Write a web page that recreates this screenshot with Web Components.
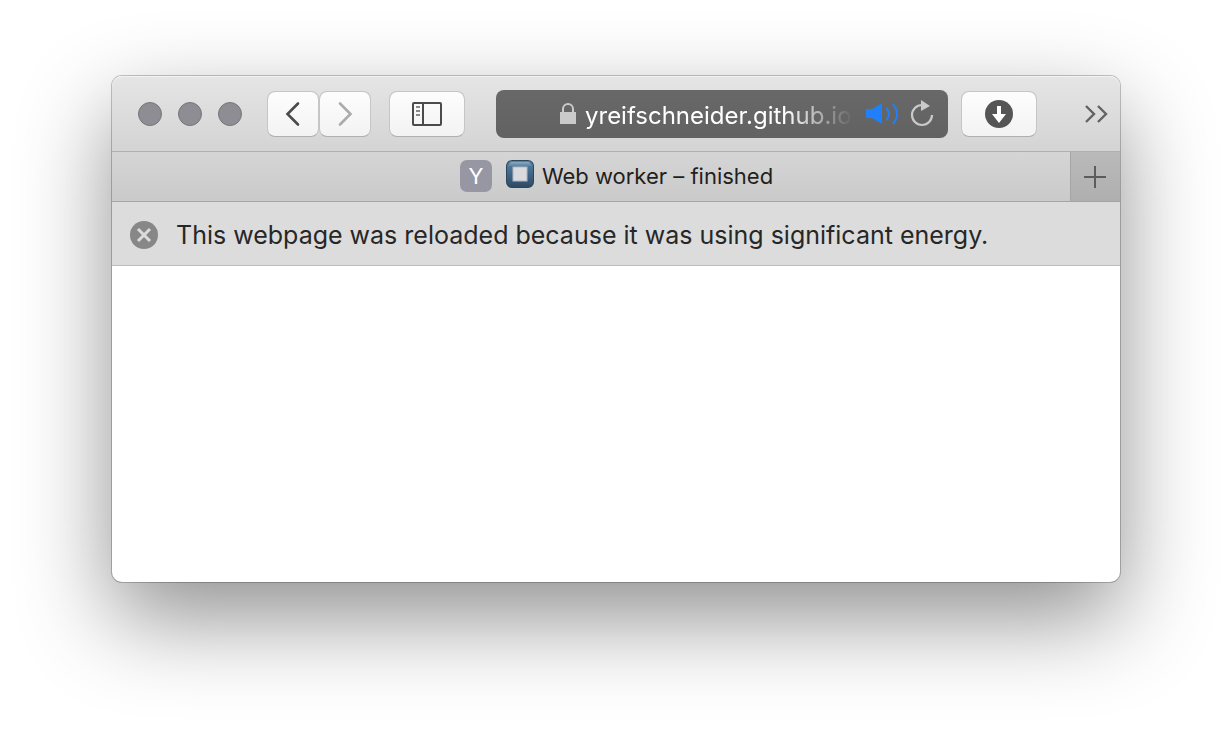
<!DOCTYPE html>
<html lang="en">
<head>
<meta charset="utf-8">
<title>Web worker – finished</title>
<style>
  html { background: #fff; }
  body { margin: 0; font-family: Inter, "Liberation Sans", sans-serif; color: #272727; }
</style>
</head>
<body>
<browser-window>
  <window-toolbar slot="toolbar"></window-toolbar>
  <tab-bar slot="tabs"><page-tab letter="Y">Web worker – finished</page-tab></tab-bar>
  <notice-bar slot="notice">This webpage was reloaded because it was using significant energy.</notice-bar>
</browser-window>

<script>
const define = (name, markup, setup) => {
  customElements.define(name, class extends HTMLElement {
    constructor() {
      super();
      this.attachShadow({ mode: 'open' }).innerHTML = markup;
    }
    connectedCallback() { if (setup) setup(this, this.shadowRoot); }
  });
};

define('browser-window', `
  <style>
    :host { display: flex; box-sizing: border-box; min-height: 100vh; padding: 76px 112px 148px; overflow: hidden; }
    .frame { flex: 1; min-width: 0; display: flex; flex-direction: column; background: #fff; border-radius: 10px;
      box-shadow: 0 0 0 1px rgba(0,0,0,.22), 0 36px 92px rgba(0,0,0,.44); }
    main { flex: 1; }
  </style>
  <div class="frame">
    <slot name="toolbar"></slot>
    <slot name="tabs"></slot>
    <slot name="notice"></slot>
    <main><slot></slot></main>
  </div>`);

define('traffic-lights', `
  <style>
    :host { display: flex; gap: 16px; }
    button { width: 24px; height: 24px; padding: 0; border: 1px solid #77767b; border-radius: 50%; background: #8e8d93; }
  </style>
  <button aria-label="Close"></button><button aria-label="Minimize"></button><button aria-label="Zoom"></button>`);

define('tool-button', `
  <style>
    :host { display: block; width: 76px; }
    :host([narrow]) { width: 52px; }
    button { display: grid; place-items: center; box-sizing: border-box; width: 100%; height: 46px; padding: 0;
      border: 1px solid #c6c6c6; border-bottom-color: #b0b0b0; border-radius: 8px;
      background: linear-gradient(#fdfdfd, #f3f3f3); background-clip: padding-box; }
  </style>
  <button><slot></slot></button>`,
  (el, root) => root.querySelector('button').setAttribute('aria-label', el.getAttribute('label')));

define('address-field', `
  <style>
    :host { display: flex; align-items: center; box-sizing: border-box; height: 48px; padding: 0 14px 0 63px;
      border-radius: 8px; background: linear-gradient(#686868, #626262); }
    svg { display: block; flex: none; }
    input { flex: 1; min-width: 0; box-sizing: border-box; height: 36px; margin: 0 12px 0 8px; padding: 4px 0 0; border: 0; outline: 0; background: none;
      color: #fff; font: 24px/32px Inter, "Liberation Sans", sans-serif;
      -webkit-mask-image: linear-gradient(90deg, #000 calc(100% - 68px), transparent);
      mask-image: linear-gradient(90deg, #000 calc(100% - 68px), transparent); }
    button { border: 0; padding: 0; background: none; }
    .reload { margin-left: 11px; }
  </style>
  <svg width="18" height="22" viewBox="0 0 18 22"><path d="M4 10V6a5 5 0 0 1 10 0v4" fill="none" stroke="#cacaca" stroke-width="2"/><path d="M1 9h16v12H1z" fill="#cacaca"/></svg>
  <input type="text" aria-label="Address" value="yreifschneider.github.io">
  <button aria-label="Mute this tab"><svg width="34" height="24" viewBox="0 0 34 24"><path d="M1 7h6l10-6v21l-10-6H1z" fill="#1f80fb"/><path d="M21.500 6q5 6 0 12M28 2q8 10 0 20" fill="none" stroke="#1f80fb" stroke-width="2"/></svg></button>
  <button class="reload" aria-label="Reload"><svg width="24" height="28" viewBox="0 0 24 28"><path d="M12 5A10 10 0 1 0 22 15" fill="none" stroke="#cacaca" stroke-width="2.200"/><path d="M11 0l9 6-9 5z" fill="#cacaca"/></svg></button>`);

define('window-toolbar', `
  <style>
    :host { display: flex; align-items: center; box-sizing: border-box; height: 76px; padding: 0 12px 0 26px;
      border-bottom: 1px solid #b0b0b0; border-radius: 10px 10px 0 0;
      background: linear-gradient(#e5e5e5, #d4d4d4); box-shadow: inset 0 1px #f2f2f2; }
    .history { display: flex; margin: 0 18px 0 25px; }
    address-field { flex: 1; min-width: 0; margin: 0 13px 0 31px; }
    .more { margin-left: 47px; padding: 0; border: 0; background: none; }
    svg { display: block; }
  </style>
  <traffic-lights></traffic-lights>
  <div class="history">
    <tool-button narrow label="Back"><svg width="16" height="26" viewBox="0 0 16 26"><path d="M13 2.500L2.500 13 13 23.500" fill="none" stroke="#4b4b4b" stroke-width="2.600" stroke-linecap="round"/></svg></tool-button>
    <tool-button narrow label="Forward"><svg width="16" height="26" viewBox="0 0 16 26"><path d="M3 2.500L13.500 13 3 23.500" fill="none" stroke="#ababab" stroke-width="2.600" stroke-linecap="round"/></svg></tool-button>
  </div>
  <tool-button label="Show sidebar"><svg width="30" height="24" viewBox="0 0 30 24"><rect x="1" y="1" width="28" height="22" rx="1" fill="none" stroke="#4b4b4b" stroke-width="2"/><path d="M11 1v22" stroke="#4b4b4b" stroke-width="2"/><path d="M4 5h4M4 9h4M4 13h4" stroke="#8a8a8a" stroke-width="2"/></svg></tool-button>
  <address-field></address-field>
  <tool-button label="Downloads"><svg width="28" height="28" viewBox="0 0 28 28"><circle cx="14" cy="14" r="14" fill="#555"/><path d="M12 6h4v8h5l-7 9-7-9h5z" fill="#fff"/></svg></tool-button>
  <button class="more" aria-label="More tools"><svg width="24" height="20" viewBox="0 0 24 20"><path d="M2 2l8 8-8 8M14 2l8 8-8 8" fill="none" stroke="#636363" stroke-width="2.400"/></svg></button>`);

define('tab-bar', `
  <style>
    :host { display: flex; box-sizing: border-box; height: 50px; border-bottom: 1px solid #a5a5a5; background: linear-gradient(#d5d5d5, #cacaca); }
    ::slotted(*) { flex: 1; min-width: 0; }
    button { display: grid; place-items: center; box-sizing: border-box; width: 50px; padding: 0 2px 0 0; border: 0;
      border-left: 1px solid #a5a5a5; background: linear-gradient(#bababa, #afafaf); }
  </style>
  <slot></slot>
  <button aria-label="New tab"><svg width="22" height="22" viewBox="0 0 22 22"><path d="M11 0v22M0 11h22" stroke="#5c5c5c" stroke-width="2"/></svg></button>`);

define('page-tab', `
  <style>
    :host { display: flex; align-items: center; justify-content: center; font-size: 22px; line-height: 32px; color: #1f1f1f; padding: 0 0 2px 51px; white-space: nowrap; }
    .icon { width: 32px; height: 32px; margin-right: 14px; border-radius: 7px; background: #9797a3; color: #fff; text-align: center; }
    svg { flex: none; margin: 0 8px 4px 0; }
  </style>
  <span class="icon"></span>
  <svg width="28" height="28" viewBox="0 0 28 28"><defs><linearGradient id="body" x2="0" y2="1"><stop stop-color="#5681a7"/><stop offset="1" stop-color="#2e4a64"/></linearGradient><linearGradient id="shine" x2="0" y2="1"><stop stop-color="#8ba8c0"/><stop offset="1" stop-color="#5a81a4"/></linearGradient></defs><rect width="28" height="28" rx="6" fill="#2c465e"/><rect x="1" y="1" width="26" height="26" rx="5" fill="url(#body)"/><path d="M5 2h18l3 4H2z" fill="url(#shine)"/><rect x="7" y="7" width="14" height="14" fill="#d8dade" stroke="#b1b9c2" stroke-width="1"/></svg>
  <span><slot></slot></span>`,
  (el, root) => root.querySelector('.icon').textContent = el.getAttribute('letter'));

define('notice-bar', `
  <style>
    :host { display: flex; align-items: center; box-sizing: border-box; height: 64px; padding: 3px 18px 0; gap: 18px;
      border-bottom: 1px solid #bcbcbc; background: #dcdcdc; font-size: 25px; line-height: 32px; white-space: nowrap; }
    button { flex: none; padding: 0; border: 0; background: none; }
    svg { display: block; }
  </style>
  <button aria-label="Dismiss"><svg width="28" height="28" viewBox="0 0 28 28"><circle cx="14" cy="14" r="14" fill="#878787"/><path d="M8 8l12 12M20 8L8 20" stroke="#dcdcdc" stroke-width="3"/></svg></button>
  <span><slot></slot></span>`);
</script>
</body>
</html>
